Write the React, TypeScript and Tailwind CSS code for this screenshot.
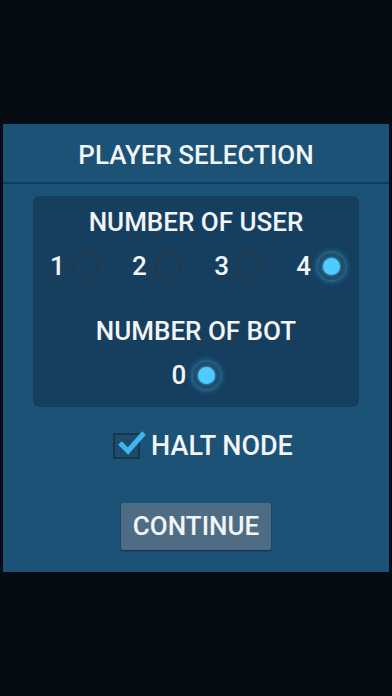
import React from "react";

function Radio({ checked }: { checked?: boolean }) {
  return (
    <span
      className={
        "flex h-[27px] w-[27px] items-center justify-center rounded-full border-2 " +
        (checked ? "border-[#2a4a60] shadow-[0_0_6px_#2fa8e0]" : "border-[#22394a]")
      }
    >
      {checked && <span className="h-[17px] w-[17px] rounded-full bg-[#4fcbff] shadow-[0_0_4px_#4fcbff]" />}
    </span>
  );
}

export default function App() {
  const users = [1, 2, 3, 4];
  return (
    <div
      className="flex h-[696px] w-[392px] flex-col bg-[#050c13] pt-[124px] px-[3px] text-[#f2f4f6]"
      style={{ fontFamily: "Roboto, 'Liberation Sans', sans-serif" }}
    >
      <div className="flex h-[448px] flex-col bg-[#1b5275]">
        <div className="flex h-[58px] items-center justify-center pt-[3px] text-[26px] font-medium leading-[30px]">
          PLAYER SELECTION
        </div>
        <div className="h-[2px] bg-[#0d3c68]" />
        <div className="mx-[30px] mt-[12px] flex h-[211px] flex-col items-center rounded-md bg-[#163f5f] pt-[11px]">
          <div className="text-[26px] font-medium leading-[30px]">NUMBER OF USER</div>
          <div className="mt-[15px] flex w-full justify-between pl-[17px] pr-[14px]">
            {users.map((n) => (
              <div key={n} className="flex items-center gap-[7px]">
                <span className="text-[26px] font-medium leading-[28px]">{n}</span>
                <Radio checked={n === 4} />
              </div>
            ))}
          </div>
          <div className="mt-[36px] text-[26px] font-medium leading-[30px]">NUMBER OF BOT</div>
          <div className="mt-[15px] flex items-center gap-[7px]">
            <span className="text-[26px] font-medium leading-[28px]">0</span>
            <Radio checked />
          </div>
        </div>
        <div className="mt-[24px] flex items-center justify-center gap-[11px] pl-[14px]">
          <span className="relative h-[26px] w-[27px] border-2 border-[#163650] bg-[#1b4c6c]">
            <svg viewBox="0 0 32 30" className="absolute -top-[4px] left-0 h-[30px] w-[32px]">
              <path
                d="M5 12 L13 20 L29 2"
                fill="none"
                stroke="#3fb6ee"
                strokeWidth="5"
                strokeLinecap="butt"
              />
            </svg>
          </span>
          <span className="text-[27px] font-medium leading-[30px]">HALT NODE</span>
        </div>
        <div className="mt-[42px] flex justify-center">
          <button className="h-[47px] w-[150px] rounded-[2px] bg-[#4e6d84] text-[26px] font-medium shadow-[0_1px_2px_rgba(0,0,0,0.4)]">
            CONTINUE
          </button>
        </div>
      </div>
    </div>
  );
}
